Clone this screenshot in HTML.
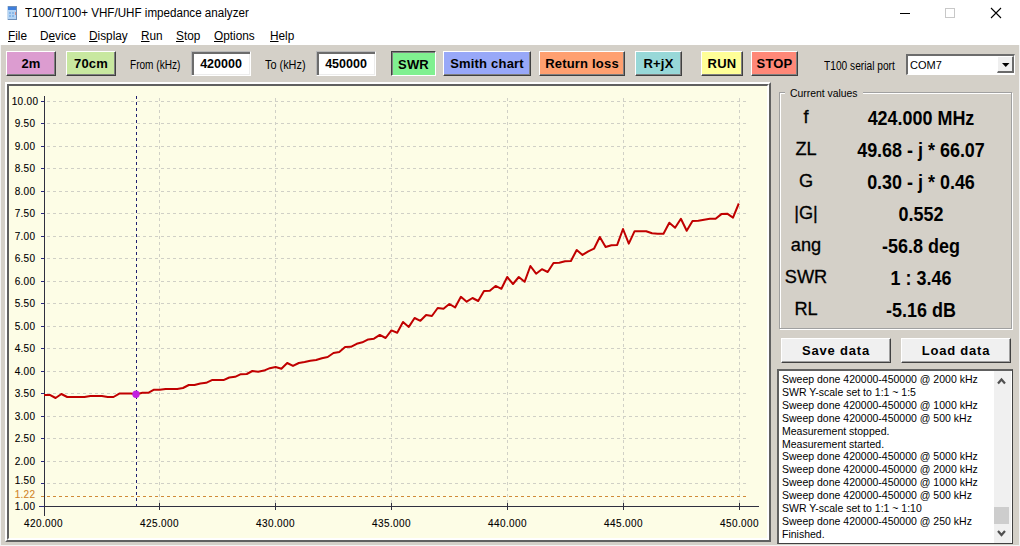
<!DOCTYPE html>
<html><head><meta charset="utf-8">
<style>
* { margin:0; padding:0; box-sizing:border-box; }
html,body { width:1020px; height:546px; overflow:hidden; background:#d4d0c8; font-family:"Liberation Sans", sans-serif; }
.a { position:absolute; }
#top { left:0; top:0; width:1020px; height:45px; background:#fff; }
.title { left:25px; top:6px; font-size:12.3px; line-height:15px; color:#000; white-space:nowrap; transform:scaleX(0.945); transform-origin:0 0; }
.menu { top:29px; font-size:12.3px; line-height:15px; color:#000; white-space:nowrap; transform:scaleX(0.96); transform-origin:0 0; }
.menu u { text-decoration:underline; text-underline-offset:1px; }
.btn { position:absolute; top:51px; height:25px; border-top:1px solid #fff; border-left:1px solid #fff; border-right:1px solid #404040; border-bottom:1px solid #404040; box-shadow: inset -1px -1px 0 #808080;
  font-weight:bold; font-size:13px; color:#000; text-align:center; line-height:23px; white-space:nowrap; letter-spacing:0.2px; }
.btn.sunk { border-top:1px solid #404040; border-left:1px solid #404040; border-right:1px solid #fff; border-bottom:1px solid #fff; box-shadow: inset 1px 1px 0 #808080; line-height:25px; }
.lbl { position:absolute; font-size:12px; line-height:14px; color:#000; white-space:nowrap; transform-origin:0 0; }
.tb { position:absolute; top:51px; height:25px; width:60px; background:#fff; border-top:1px solid #b8b8b8; border-left:1px solid #b8b8b8; border-right:1px solid #fff; border-bottom:1px solid #fff; box-shadow: inset 2px 2px 0 #6c6c6c, inset -1px -1px 0 #ececec;
  font-size:12.5px; font-weight:bold; text-align:center; line-height:25px; color:#000; }
#frame { left:5px; top:82px; width:766px; height:460px; border-top:2px solid #fff; border-left:2px solid #fff; border-right:2px solid #606060; border-bottom:2px solid #606060; }
#frame2 { left:7px; top:84px; width:762px; height:456px; border-top:2px solid #606060; border-left:2px solid #606060; border-right:2px solid #fff; border-bottom:2px solid #fff; }
svg text.ax { font-family:"Liberation Sans", sans-serif; font-size:10px; letter-spacing:0.3px; fill:#000; stroke:#000; stroke-width:0.1px; }
#gb { left:779px; top:92px; width:233px; height:237px; border:1px solid #a0a0a0; box-shadow: inset 1px 1px 0 #fff, 1px 1px 0 #fff; }
.gbl { left:785px; top:88px; font-size:10.4px; background:#d4d0c8; padding:0 5px 0 5px; white-space:nowrap; }
.lab { position:absolute; left:766px; width:80px; text-align:center; font-size:18.2px; line-height:20px; color:#000; white-space:nowrap; -webkit-text-stroke:0.3px #000; }
.val { position:absolute; left:821px; width:200px; text-align:center; font-size:19.5px; line-height:22px; font-weight:bold; color:#000; white-space:nowrap; transform:scaleX(0.92); }
.pb { position:absolute; top:338px; height:25px; background:#f0f0f0; border-top:1px solid #fff; border-left:1px solid #fff; border-right:1px solid #404040; border-bottom:1px solid #404040; box-shadow: inset -1px -1px 0 #a0a0a0; font-weight:bold; font-size:13px; text-align:center; line-height:23px; letter-spacing:0.8px; }
#lb { left:777px; top:369px; width:236px; height:175px; background:#fff; border-top:2px solid #606060; border-left:2px solid #606060; border-right:1px solid #404040; border-bottom:1px solid #404040; box-shadow: inset -1px -1px 0 #fff; overflow:hidden; }
.ll { position:absolute; left:3px; font-size:10.5px; line-height:13px; color:#000; white-space:nowrap; margin-top:2px; }
</style></head><body>
<div id="top" class="a"></div>
<div class="a" style="left:0;top:45px;width:1px;height:501px;background:#f4f4f4"></div>
<div class="a" style="left:1019px;top:45px;width:1px;height:501px;background:#f4f4f4"></div>
<div class="a" style="left:0;top:545px;width:1020px;height:1px;background:#f4f4f4"></div>
<!-- icon -->
<svg class="a" style="left:7px;top:6px" width="11" height="14">
<rect x="0" y="0" width="10" height="14" fill="#6f8fb8"/>
<rect x="1" y="1" width="8" height="12" fill="#b4d4f4"/>
<rect x="1" y="1" width="8" height="3" fill="#3f7fdc"/>
<rect x="2" y="6" width="2" height="2" fill="#8ab8e8"/><rect x="5" y="6" width="2" height="2" fill="#8ab8e8"/>
<rect x="2" y="9" width="2" height="2" fill="#8ab8e8"/><rect x="5" y="9" width="2" height="2" fill="#8ab8e8"/>
<rect x="8" y="6" width="1" height="3" fill="#d89088"/>
<rect x="0" y="0" width="1" height="14" fill="#c8dcf0"/>
</svg>
<div class="a title">T100/T100+ VHF/UHF impedance analyzer</div>
<!-- window controls -->
<div class="a" style="left:900px;top:13px;width:10px;height:1px;background:#000"></div>
<div class="a" style="left:945px;top:8px;width:10px;height:10px;border:1px solid #c8c8c8"></div>
<svg class="a" style="left:990px;top:7px" width="12" height="12"><path d="M1 1 L11 11 M11 1 L1 11" stroke="#000" stroke-width="1.1"/></svg>
<div class="a menu" style="left:8px"><u>F</u>ile</div>
<div class="a menu" style="left:40px">D<u>e</u>vice</div>
<div class="a menu" style="left:89px"><u>D</u>isplay</div>
<div class="a menu" style="left:141px"><u>R</u>un</div>
<div class="a menu" style="left:176px"><u>S</u>top</div>
<div class="a menu" style="left:214px"><u>O</u>ptions</div>
<div class="a menu" style="left:270px"><u>H</u>elp</div>
<!-- toolbar -->
<div class="btn" style="left:6px;width:50px;background:#dc9cd0">2m</div>
<div class="btn" style="left:66px;width:50px;background:#c8e8a0">70cm</div>
<div class="lbl" style="left:130px;top:58px;transform:scaleX(0.84)">From (kHz)</div>
<div class="tb" style="left:191px">420000</div>
<div class="lbl" style="left:265px;top:58px;transform:scaleX(0.908)">To (kHz)</div>
<div class="tb" style="left:316px">450000</div>
<div class="btn sunk" style="left:391px;width:45px;background:#80f090">SWR</div>
<div class="btn" style="left:443px;width:88px;background:#98a8f8">Smith chart</div>
<div class="btn" style="left:539px;width:86px;background:#ffa070">Return loss</div>
<div class="btn" style="left:635px;width:47px;background:#98d8d8">R+jX</div>
<div class="btn" style="left:701px;width:42px;background:#ffff98">RUN</div>
<div class="btn" style="left:751px;width:47px;background:#ff8878">STOP</div>
<div class="lbl" style="left:824px;top:59px;transform:scaleX(0.849)">T100 serial port</div>
<div class="a" style="left:906px;top:54px;width:109px;height:21px;background:#fff;border-top:2px solid #6c6c6c;border-left:2px solid #6c6c6c;border-right:1px solid #fff;border-bottom:1px solid #fff"></div>
<div class="lbl" style="left:910px;top:58px;font-size:11px">COM7</div>
<div class="a" style="left:997px;top:56px;width:17px;height:17px;background:#efefef;border-right:2px solid #6a6a6a;border-bottom:2px solid #6a6a6a;border-top:1px solid #fff;border-left:1px solid #fff"></div>
<svg class="a" style="left:1002px;top:63px" width="9" height="6"><path d="M0 0 H7.5 L3.75 4 Z" fill="#000"/></svg>
<!-- toolbar bottom line -->
<!-- chart -->
<div id="frame" class="a"></div>
<div id="frame2" class="a"></div>
<svg class="a" style="left:0;top:0" width="1020" height="546">
<rect x="9" y="86" width="758" height="452" fill="#fdfde6"/>
<line x1="47" y1="483.5" x2="747" y2="483.5" stroke="#d0d0c6" stroke-width="1" stroke-dasharray="3,3"/>
<line x1="41" y1="483.5" x2="44" y2="483.5" stroke="#2a2a80" stroke-width="1"/>
<line x1="47" y1="461.5" x2="747" y2="461.5" stroke="#d0d0c6" stroke-width="1" stroke-dasharray="3,3"/>
<line x1="41" y1="461.5" x2="44" y2="461.5" stroke="#2a2a80" stroke-width="1"/>
<line x1="47" y1="438.5" x2="747" y2="438.5" stroke="#d0d0c6" stroke-width="1" stroke-dasharray="3,3"/>
<line x1="41" y1="438.5" x2="44" y2="438.5" stroke="#2a2a80" stroke-width="1"/>
<line x1="47" y1="416.5" x2="747" y2="416.5" stroke="#d0d0c6" stroke-width="1" stroke-dasharray="3,3"/>
<line x1="41" y1="416.5" x2="44" y2="416.5" stroke="#2a2a80" stroke-width="1"/>
<line x1="47" y1="393.5" x2="747" y2="393.5" stroke="#d0d0c6" stroke-width="1" stroke-dasharray="3,3"/>
<line x1="41" y1="393.5" x2="44" y2="393.5" stroke="#2a2a80" stroke-width="1"/>
<line x1="47" y1="371.5" x2="747" y2="371.5" stroke="#d0d0c6" stroke-width="1" stroke-dasharray="3,3"/>
<line x1="41" y1="371.5" x2="44" y2="371.5" stroke="#2a2a80" stroke-width="1"/>
<line x1="47" y1="348.5" x2="747" y2="348.5" stroke="#d0d0c6" stroke-width="1" stroke-dasharray="3,3"/>
<line x1="41" y1="348.5" x2="44" y2="348.5" stroke="#2a2a80" stroke-width="1"/>
<line x1="47" y1="326.5" x2="747" y2="326.5" stroke="#d0d0c6" stroke-width="1" stroke-dasharray="3,3"/>
<line x1="41" y1="326.5" x2="44" y2="326.5" stroke="#2a2a80" stroke-width="1"/>
<line x1="47" y1="303.5" x2="747" y2="303.5" stroke="#d0d0c6" stroke-width="1" stroke-dasharray="3,3"/>
<line x1="41" y1="303.5" x2="44" y2="303.5" stroke="#2a2a80" stroke-width="1"/>
<line x1="47" y1="281.5" x2="747" y2="281.5" stroke="#d0d0c6" stroke-width="1" stroke-dasharray="3,3"/>
<line x1="41" y1="281.5" x2="44" y2="281.5" stroke="#2a2a80" stroke-width="1"/>
<line x1="47" y1="258.5" x2="747" y2="258.5" stroke="#d0d0c6" stroke-width="1" stroke-dasharray="3,3"/>
<line x1="41" y1="258.5" x2="44" y2="258.5" stroke="#2a2a80" stroke-width="1"/>
<line x1="47" y1="236.5" x2="747" y2="236.5" stroke="#d0d0c6" stroke-width="1" stroke-dasharray="3,3"/>
<line x1="41" y1="236.5" x2="44" y2="236.5" stroke="#2a2a80" stroke-width="1"/>
<line x1="47" y1="213.5" x2="747" y2="213.5" stroke="#d0d0c6" stroke-width="1" stroke-dasharray="3,3"/>
<line x1="41" y1="213.5" x2="44" y2="213.5" stroke="#2a2a80" stroke-width="1"/>
<line x1="47" y1="191.5" x2="747" y2="191.5" stroke="#d0d0c6" stroke-width="1" stroke-dasharray="3,3"/>
<line x1="41" y1="191.5" x2="44" y2="191.5" stroke="#2a2a80" stroke-width="1"/>
<line x1="47" y1="168.5" x2="747" y2="168.5" stroke="#d0d0c6" stroke-width="1" stroke-dasharray="3,3"/>
<line x1="41" y1="168.5" x2="44" y2="168.5" stroke="#2a2a80" stroke-width="1"/>
<line x1="47" y1="146.5" x2="747" y2="146.5" stroke="#d0d0c6" stroke-width="1" stroke-dasharray="3,3"/>
<line x1="41" y1="146.5" x2="44" y2="146.5" stroke="#2a2a80" stroke-width="1"/>
<line x1="47" y1="123.5" x2="747" y2="123.5" stroke="#d0d0c6" stroke-width="1" stroke-dasharray="3,3"/>
<line x1="41" y1="123.5" x2="44" y2="123.5" stroke="#2a2a80" stroke-width="1"/>
<line x1="47" y1="101.5" x2="747" y2="101.5" stroke="#d0d0c6" stroke-width="1" stroke-dasharray="3,3"/>
<line x1="41" y1="101.5" x2="44" y2="101.5" stroke="#2a2a80" stroke-width="1"/>
<line x1="159.5" y1="98" x2="159.5" y2="506" stroke="#d0d0c6" stroke-width="1" stroke-dasharray="3,3"/>
<line x1="275.5" y1="98" x2="275.5" y2="506" stroke="#d0d0c6" stroke-width="1" stroke-dasharray="3,3"/>
<line x1="391.5" y1="98" x2="391.5" y2="506" stroke="#d0d0c6" stroke-width="1" stroke-dasharray="3,3"/>
<line x1="507.5" y1="98" x2="507.5" y2="506" stroke="#d0d0c6" stroke-width="1" stroke-dasharray="3,3"/>
<line x1="623.5" y1="98" x2="623.5" y2="506" stroke="#d0d0c6" stroke-width="1" stroke-dasharray="3,3"/>
<line x1="739.5" y1="98" x2="739.5" y2="506" stroke="#d0d0c6" stroke-width="1" stroke-dasharray="3,3"/>
<line x1="41" y1="496.5" x2="747" y2="496.5" stroke="#d08a38" stroke-width="1" stroke-dasharray="3,3"/>
<line x1="44.5" y1="96" x2="44.5" y2="516" stroke="#303040" stroke-width="1"/>
<line x1="39" y1="506.5" x2="759" y2="506.5" stroke="#303040" stroke-width="1"/>
<line x1="39" y1="506.5" x2="44" y2="506.5" stroke="#2a2a80" stroke-width="1"/>
<line x1="159.5" y1="503" x2="159.5" y2="510" stroke="#303040" stroke-width="1"/>
<line x1="275.5" y1="503" x2="275.5" y2="510" stroke="#303040" stroke-width="1"/>
<line x1="391.5" y1="503" x2="391.5" y2="510" stroke="#303040" stroke-width="1"/>
<line x1="507.5" y1="503" x2="507.5" y2="510" stroke="#303040" stroke-width="1"/>
<line x1="623.5" y1="503" x2="623.5" y2="510" stroke="#303040" stroke-width="1"/>
<line x1="739.5" y1="503" x2="739.5" y2="510" stroke="#303040" stroke-width="1"/>
<line x1="136.5" y1="96" x2="136.5" y2="506" stroke="#202070" stroke-width="1" stroke-dasharray="3,3"/>
<polyline points="44.0,394.9 49.8,394.9 55.6,398.0 61.4,394.0 67.2,397.0 73.0,397.0 78.7,397.0 84.5,397.0 90.3,396.0 96.1,396.0 101.9,396.0 107.7,397.0 113.5,397.0 119.3,393.6 125.1,393.6 130.8,393.6 136.6,394.3 142.4,392.8 148.2,392.8 154.0,389.7 159.8,389.7 165.6,388.9 171.4,388.9 177.2,388.9 183.0,388.0 188.8,385.0 194.5,385.0 200.3,383.5 206.1,382.8 211.9,380.1 217.7,380.1 223.5,380.1 229.3,377.5 235.1,376.8 240.9,374.2 246.7,374.0 252.4,371.0 258.2,371.8 264.0,370.6 269.8,368.2 275.6,367.0 281.4,368.8 287.2,363.0 293.0,365.9 298.8,363.0 304.6,362.0 310.3,360.8 316.1,360.0 321.9,358.2 327.7,357.0 333.5,353.0 339.3,352.0 345.1,347.0 350.9,346.8 356.7,343.8 362.4,342.3 368.2,339.4 374.0,338.7 379.8,334.9 385.6,338.0 391.4,330.4 397.2,332.7 403.0,322.0 408.8,326.9 414.6,318.0 420.4,320.8 426.1,315.0 431.9,316.0 437.7,308.0 443.5,308.8 449.3,304.0 455.1,307.4 460.9,296.8 466.7,301.7 472.5,298.0 478.2,301.0 484.0,291.0 489.8,290.8 495.6,285.9 501.4,288.8 507.2,277.0 513.0,284.0 518.8,277.0 524.6,281.8 530.4,266.0 536.1,273.7 541.9,269.2 547.7,272.0 553.5,263.0 559.3,262.7 565.1,261.3 570.9,261.0 576.7,250.0 582.5,254.9 588.3,251.3 594.0,248.7 599.8,237.0 605.6,247.0 611.4,245.3 617.2,244.9 623.0,229.0 628.8,243.6 634.6,231.2 640.4,231.2 646.2,231.2 652.0,233.3 657.7,233.8 663.5,233.8 669.3,222.7 675.1,227.8 680.9,218.8 686.7,230.8 692.5,221.0 698.3,220.8 704.1,219.7 709.9,218.8 715.6,218.8 721.4,214.1 727.2,213.7 733.0,217.6 738.8,203.5" fill="none" stroke="#c00000" stroke-width="2" stroke-linejoin="round"/>
<circle cx="136" cy="394.3" r="3.7" fill="#c020e0"/>
<text x="25" y="509.6" text-anchor="middle" class="ax">1.00</text>
<text x="25" y="484.1" text-anchor="middle" class="ax">1.50</text>
<text x="25" y="464.6" text-anchor="middle" class="ax">2.00</text>
<text x="25" y="442.1" text-anchor="middle" class="ax">2.50</text>
<text x="25" y="419.6" text-anchor="middle" class="ax">3.00</text>
<text x="25" y="397.1" text-anchor="middle" class="ax">3.50</text>
<text x="25" y="374.6" text-anchor="middle" class="ax">4.00</text>
<text x="25" y="352.1" text-anchor="middle" class="ax">4.50</text>
<text x="25" y="329.6" text-anchor="middle" class="ax">5.00</text>
<text x="25" y="307.1" text-anchor="middle" class="ax">5.50</text>
<text x="25" y="284.6" text-anchor="middle" class="ax">6.00</text>
<text x="25" y="262.1" text-anchor="middle" class="ax">6.50</text>
<text x="25" y="239.6" text-anchor="middle" class="ax">7.00</text>
<text x="25" y="217.1" text-anchor="middle" class="ax">7.50</text>
<text x="25" y="194.6" text-anchor="middle" class="ax">8.00</text>
<text x="25" y="172.1" text-anchor="middle" class="ax">8.50</text>
<text x="25" y="149.6" text-anchor="middle" class="ax">9.00</text>
<text x="25" y="127.1" text-anchor="middle" class="ax">9.50</text>
<text x="25" y="104.6" text-anchor="middle" class="ax">10.00</text>
<text x="25" y="498" text-anchor="middle" class="ax" style="fill:#d08428;stroke:#d08428">1.22</text>
<text x="43.5" y="527" text-anchor="middle" class="ax" style="letter-spacing:0.4px">420.000</text>
<text x="159.5" y="527" text-anchor="middle" class="ax" style="letter-spacing:0.4px">425.000</text>
<text x="275.5" y="527" text-anchor="middle" class="ax" style="letter-spacing:0.4px">430.000</text>
<text x="391.5" y="527" text-anchor="middle" class="ax" style="letter-spacing:0.4px">435.000</text>
<text x="507.5" y="527" text-anchor="middle" class="ax" style="letter-spacing:0.4px">440.000</text>
<text x="623.5" y="527" text-anchor="middle" class="ax" style="letter-spacing:0.4px">445.000</text>
<text x="739.5" y="527" text-anchor="middle" class="ax" style="letter-spacing:0.4px">450.000</text>
</svg>
<!-- right panel -->
<div id="gb" class="a"></div>
<div class="a gbl">Current values</div>
<div class="lab" style="top:107.2px">f</div><div class="val" style="top:106.5px">424.000 MHz</div>
<div class="lab" style="top:139.2px">ZL</div><div class="val" style="top:138.5px">49.68 - j * 66.07</div>
<div class="lab" style="top:171.2px">G</div><div class="val" style="top:170.5px">0.30 - j * 0.46</div>
<div class="lab" style="top:203.2px">|G|</div><div class="val" style="top:202.5px">0.552</div>
<div class="lab" style="top:235.2px">ang</div><div class="val" style="top:234.5px">-56.8 deg</div>
<div class="lab" style="top:267.2px">SWR</div><div class="val" style="top:266.5px">1 : 3.46</div>
<div class="lab" style="top:299.2px">RL</div><div class="val" style="top:298.5px">-5.16 dB</div>
<div class="pb" style="left:781px;width:110px">Save data</div>
<div class="pb" style="left:901px;width:110px">Load data</div>
<div id="lb" class="a">
<div class="ll" style="top:0.0px">Sweep done 420000-450000 @ 2000 kHz</div>
<div class="ll" style="top:12.9px">SWR Y-scale set to 1:1 ~ 1:5</div>
<div class="ll" style="top:25.8px">Sweep done 420000-450000 @ 1000 kHz</div>
<div class="ll" style="top:38.7px">Sweep done 420000-450000 @ 500 kHz</div>
<div class="ll" style="top:51.6px">Measurement stopped.</div>
<div class="ll" style="top:64.5px">Measurement started.</div>
<div class="ll" style="top:77.4px">Sweep done 420000-450000 @ 5000 kHz</div>
<div class="ll" style="top:90.3px">Sweep done 420000-450000 @ 2000 kHz</div>
<div class="ll" style="top:103.2px">Sweep done 420000-450000 @ 1000 kHz</div>
<div class="ll" style="top:116.1px">Sweep done 420000-450000 @ 500 kHz</div>
<div class="ll" style="top:129.0px">SWR Y-scale set to 1:1 ~ 1:10</div>
<div class="ll" style="top:141.9px">Sweep done 420000-450000 @ 250 kHz</div>
<div class="ll" style="top:154.8px">Finished.</div>
<div class="a" style="left:215px;top:0;width:17px;height:172px;background:#f0f0f0"></div>
<div class="a" style="left:215px;top:136px;width:15px;height:17px;background:#cdcdcd"></div>
<svg class="a" style="left:217px;top:5px" width="12" height="10"><path d="M2 7.5 L5.5 3.5 L9 7.5" stroke="#505050" stroke-width="2.2" fill="none"/></svg>
<svg class="a" style="left:217px;top:158px" width="12" height="10"><path d="M2 2 L5.5 6 L9 2" stroke="#505050" stroke-width="2.2" fill="none"/></svg>
</div>
</body></html>
